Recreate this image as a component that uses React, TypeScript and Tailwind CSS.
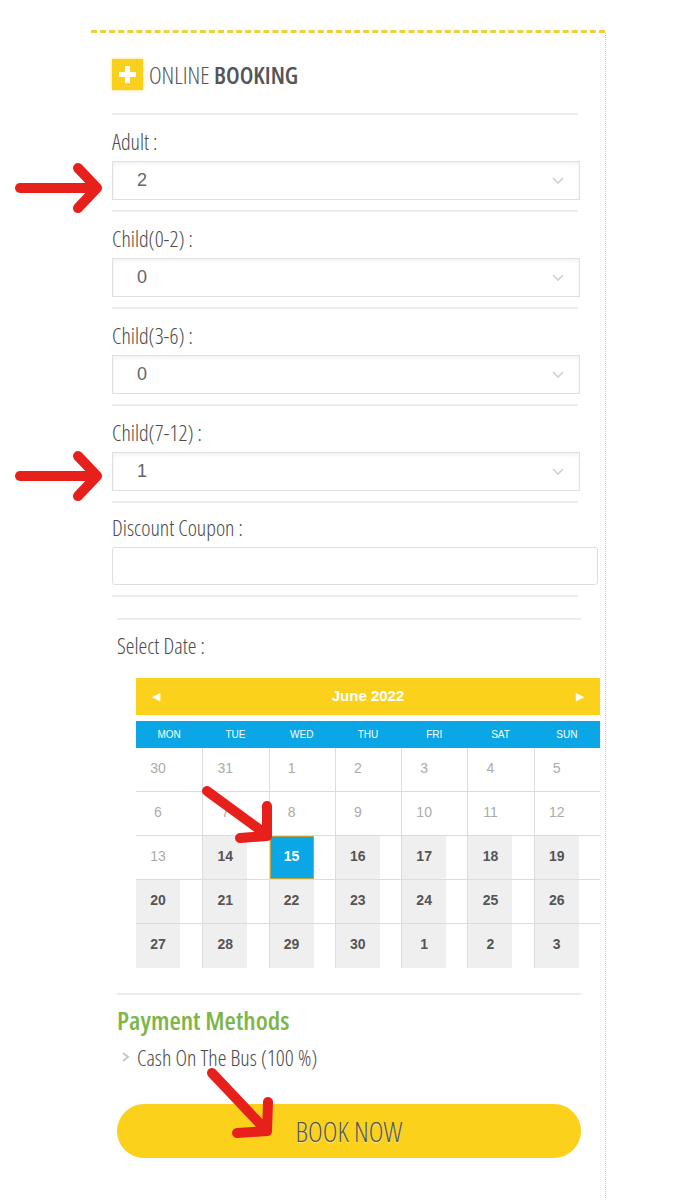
import React from 'react';

const narrow = "font-['Open_Sans','Roboto',sans-serif] [font-stretch:75%]";
const label = "font-['Open_Sans','Roboto',sans-serif] [font-stretch:78%] text-[22px] font-light text-[#4a4a4a]";
const arial = "font-['Liberation_Sans',Arial,sans-serif]";

const Chevron = () => (
  <svg width="14" height="10" viewBox="0 0 14 10" className="shrink-0">
    <polyline points="2,2 7,7 12,2" fill="none" stroke="#cfcfcf" strokeWidth="1.6" />
  </svg>
);

const Separator = ({ className = '' }: { className?: string }) => (
  <div className={`h-[2px] bg-[#ececec] ${className}`} />
);

const SelectField = ({ text, value }: { text: string; value: string }) => (
  <div className="mt-[14px]">
    <div className={`${label} h-[24px] leading-[24px]`}>{text}</div>
    <div className="mt-[8px] w-[468px] h-[39px] border border-[#e0e0e0] bg-white shadow-[inset_0_2px_4px_rgba(0,0,0,0.06)] flex items-center justify-between pl-[24px] pr-[14px]">
      <span className={`${arial} text-[18px] text-[#666]`}>{value}</span>
      <Chevron />
    </div>
    <Separator className="mt-[10px] w-[466px]" />
  </div>
);

type Cell = { n: number; off?: boolean; sel?: boolean };

const weeks: Cell[][] = [
  [{ n: 30, off: true }, { n: 31, off: true }, { n: 1, off: true }, { n: 2, off: true }, { n: 3, off: true }, { n: 4, off: true }, { n: 5, off: true }],
  [{ n: 6, off: true }, { n: 7, off: true }, { n: 8, off: true }, { n: 9, off: true }, { n: 10, off: true }, { n: 11, off: true }, { n: 12, off: true }],
  [{ n: 13, off: true }, { n: 14 }, { n: 15, sel: true }, { n: 16 }, { n: 17 }, { n: 18 }, { n: 19 }],
  [{ n: 20 }, { n: 21 }, { n: 22 }, { n: 23 }, { n: 24 }, { n: 25 }, { n: 26 }],
  [{ n: 27 }, { n: 28 }, { n: 29 }, { n: 30 }, { n: 1 }, { n: 2 }, { n: 3 }],
];

const days = ['MON', 'TUE', 'WED', 'THU', 'FRI', 'SAT', 'SUN'];

const Calendar = () => (
  <div className={`${arial} ml-[19px] mt-[21px] w-[464px]`}>
    <div className="h-[37px] bg-[#fcd11c] flex items-center justify-between px-[16px] text-white">
      <span className="text-[11px]">◀</span>
      <span className="text-[15px] font-bold">June 2022</span>
      <span className="text-[11px]">▶</span>
    </div>
    <div className="mt-[6px] h-[27px] bg-[#0aa6e6] grid grid-cols-7 text-white text-[10px]">
      {days.map(d => (
        <div key={d} className="flex items-center justify-center">{d}</div>
      ))}
    </div>
    <div>
      {weeks.map((w, i) => (
        <div key={i} className={`grid grid-cols-7 h-[44px] ${i < 4 ? 'border-b border-[#dcdcdc]' : ''}`}>
          {w.map((c, j) => (
            <div key={j} className={`h-full ${j > 0 ? 'border-l border-[#dcdcdc]' : ''}`}>
              <div
                className={`w-[44px] h-full flex items-center justify-center pb-[3px] text-[14px] ${
                  c.sel
                    ? 'bg-[#0aa6e6] border border-[#b9a53c] text-white font-bold'
                    : c.off
                    ? 'text-[#ababab]'
                    : 'bg-[#efefef] text-[#555] font-bold'
                }`}
              >
                {c.n}
              </div>
            </div>
          ))}
        </div>
      ))}
    </div>
  </div>
);

const Arrows = () => (
  <svg className="absolute top-0 left-0 pointer-events-none" width="700" height="1200" viewBox="0 0 700 1200">
    <g fill="none" stroke="#e8201c" strokeWidth="10" strokeLinecap="round" strokeLinejoin="round">
      <path d="M20 188 H92" />
      <path d="M78 168 L97 188 L78 208" />
      <path d="M20 476 H92" />
      <path d="M78 456 L97 476 L78 496" />
      <path d="M207 791 L263 832" />
      <path d="M267 806 L267 836 L240 838" />
      <path d="M212 1073 L263 1127" />
      <path d="M268 1102 L267 1131 L237 1133" />
    </g>
  </svg>
);

export default function App() {
  return (
    <div className="relative w-[700px] min-h-[1200px] bg-white">
      <div className="pt-[30px] pl-[91px]">
        <div className="w-[514px] border-t-[3px] border-dashed border-[#f2cf3a]" />
        <div className="w-[515px] border-r border-dotted border-[#c4c4c4] pt-[26px] pb-[40px]">
          <div className="pl-[21px]">
            <div className="flex items-center h-[31px]">
              <div className="w-[31px] h-[31px] bg-[#f9d01e] shadow-[0_0_3px_rgba(249,208,30,0.7)] flex items-center justify-center">
                <svg width="17" height="17" viewBox="0 0 17 17">
                  <rect x="6" y="0" width="5" height="17" fill="white" />
                  <rect x="0" y="6" width="17" height="5" fill="white" />
                </svg>
              </div>
              <div className={`${narrow} ml-[6px] text-[24px] text-[#555]`}>
                <span className="font-light">ONLINE </span>
                <span className="font-semibold">BOOKING</span>
              </div>
            </div>
            <Separator className="mt-[23px] w-[466px]" />

            <SelectField text="Adult :" value="2" />
            <SelectField text="Child(0-2) :" value="0" />
            <SelectField text="Child(3-6) :" value="0" />
            <SelectField text="Child(7-12) :" value="1" />

            <div className="mt-[12px]">
              <div className={`${label} h-[24px] leading-[24px]`}>Discount Coupon :</div>
              <div className="mt-[8px] w-[486px] h-[38px] border border-[#dedede] rounded-[3px] bg-white" />
              <Separator className="mt-[10px] w-[466px]" />
            </div>
          </div>

          <div className="pl-[26px]">
            <Separator className="mt-[21px] w-[464px]" />
            <div className={`${label} mt-[13px] h-[24px] leading-[24px]`}>Select Date :</div>
            <Calendar />
            <Separator className="mt-[25px] w-[464px]" />
            <div className={`${narrow} mt-[10px] h-[30px] leading-[30px] text-[26px] font-semibold text-[#7db548]`}>Payment Methods</div>
            <div className={`${label} mt-[10px] h-[24px] flex items-center`}>
              <svg width="10" height="12" viewBox="0 0 10 12" className="ml-[4px] mr-[6px]">
                <polyline points="2,2 7,6 2,10" fill="none" stroke="#c8c8c8" strokeWidth="2" />
              </svg>
              <span>Cash On The Bus (100 %)</span>
            </div>
            <div className="mt-[35px] w-[464px] h-[54px] rounded-full bg-[#fcd11c] flex items-center justify-center">
              <span className={`${narrow} text-[28px] font-light text-[#555] [text-shadow:0_1px_1px_rgba(255,255,255,0.6)]`}>BOOK NOW</span>
            </div>
          </div>
        </div>
      </div>
      <Arrows />
    </div>
  );
}
